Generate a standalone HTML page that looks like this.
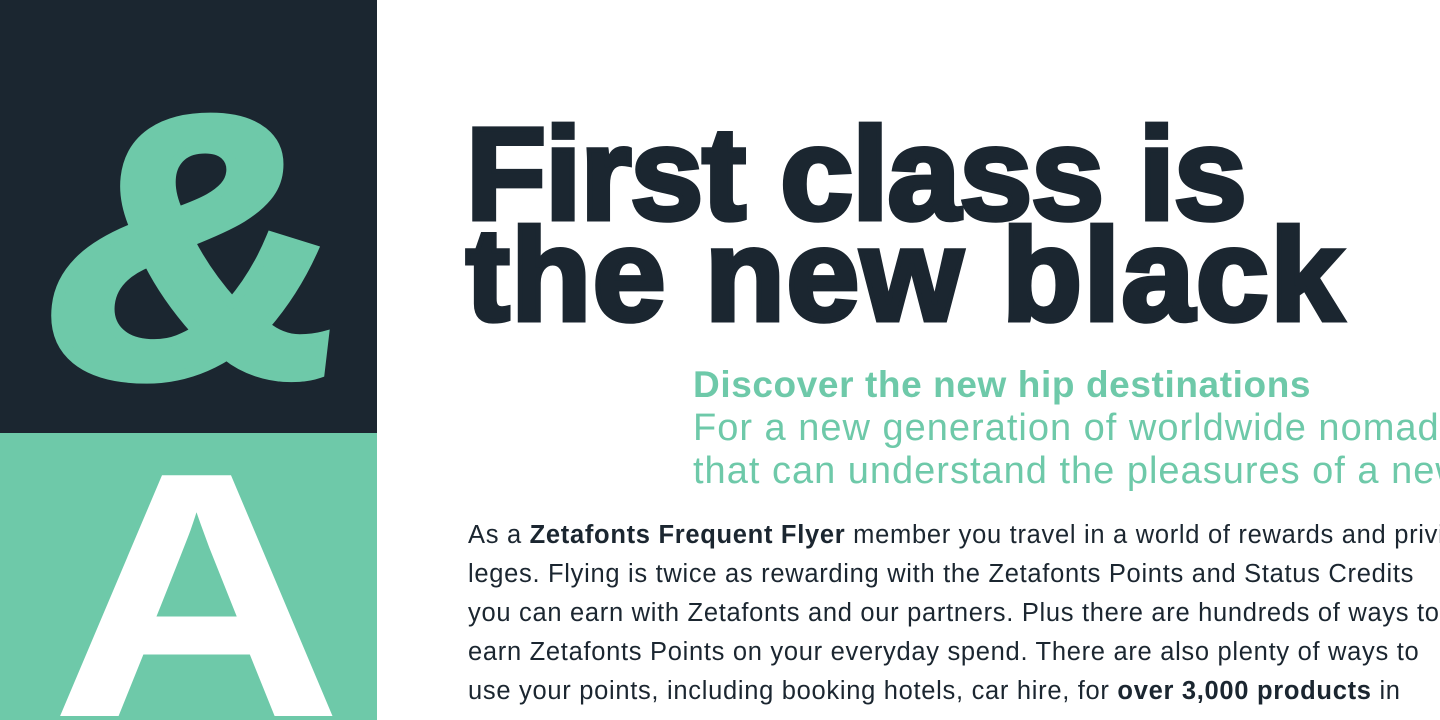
<!DOCTYPE html>
<html><head><meta charset="utf-8"><style>
html,body{margin:0;padding:0;width:1440px;height:720px;overflow:hidden;background:#fff;position:relative;font-family:"Liberation Sans",sans-serif}
.dark{position:absolute;left:0;top:0;width:377px;height:433px;background:#1b2630;overflow:hidden}
.green{position:absolute;left:0;top:433px;width:377px;height:287px;background:#6ec9a9;overflow:hidden}
.amp{position:absolute;left:68px;top:60px;font-size:372px;font-weight:bold;color:#6ec9a9;line-height:1;transform:scaleX(1.12) skewX(-6deg);transform-origin:left top;-webkit-text-stroke:10px #6ec9a9}
.A{position:absolute;left:50px;top:-12px;font-size:350px;font-weight:bold;color:#fff;line-height:1;transform:scaleX(1.16);transform-origin:left top}
.h{position:absolute;left:466px;font-size:131px;font-weight:bold;color:#1b2630;line-height:1;white-space:nowrap;letter-spacing:-1px;-webkit-text-stroke:5px #1b2630}
.sub{position:absolute;left:693px;color:#6ec9a9;white-space:nowrap;line-height:1}
.body{position:absolute;left:468px;top:516px;font-size:25.5px;line-height:39px;color:#1b2630;white-space:nowrap;letter-spacing:0.7px;height:204px;overflow:hidden}
</style></head><body>
<div class="dark"><div class="amp">&amp;</div></div>
<div class="green"><div class="A">A</div></div>
<div class="h" style="top:108px">First class is</div>
<div class="h" style="top:209px;letter-spacing:1.5px">the new black</div>
<div class="sub" style="top:366px;font-size:37px;font-weight:bold;letter-spacing:0.6px">Discover the new hip destinations</div>
<div class="sub" style="top:409px;font-size:38px;letter-spacing:1px">For a new generation of worldwide nomads</div>
<div class="sub" style="top:452px;font-size:38px;letter-spacing:1px">that can understand the pleasures of a new</div>
<div class="body">As a <b>Zetafonts Frequent Flyer</b> member you travel in a world of rewards and privi-<br>leges. Flying is twice as rewarding with the Zetafonts Points and Status Credits<br>you can earn with Zetafonts and our partners. Plus there are hundreds of ways to<br>earn Zetafonts Points on your everyday spend. There are also plenty of ways to<br>use your points, including booking hotels, car hire, for <b>over 3,000 products</b> in</div>
</body></html>
